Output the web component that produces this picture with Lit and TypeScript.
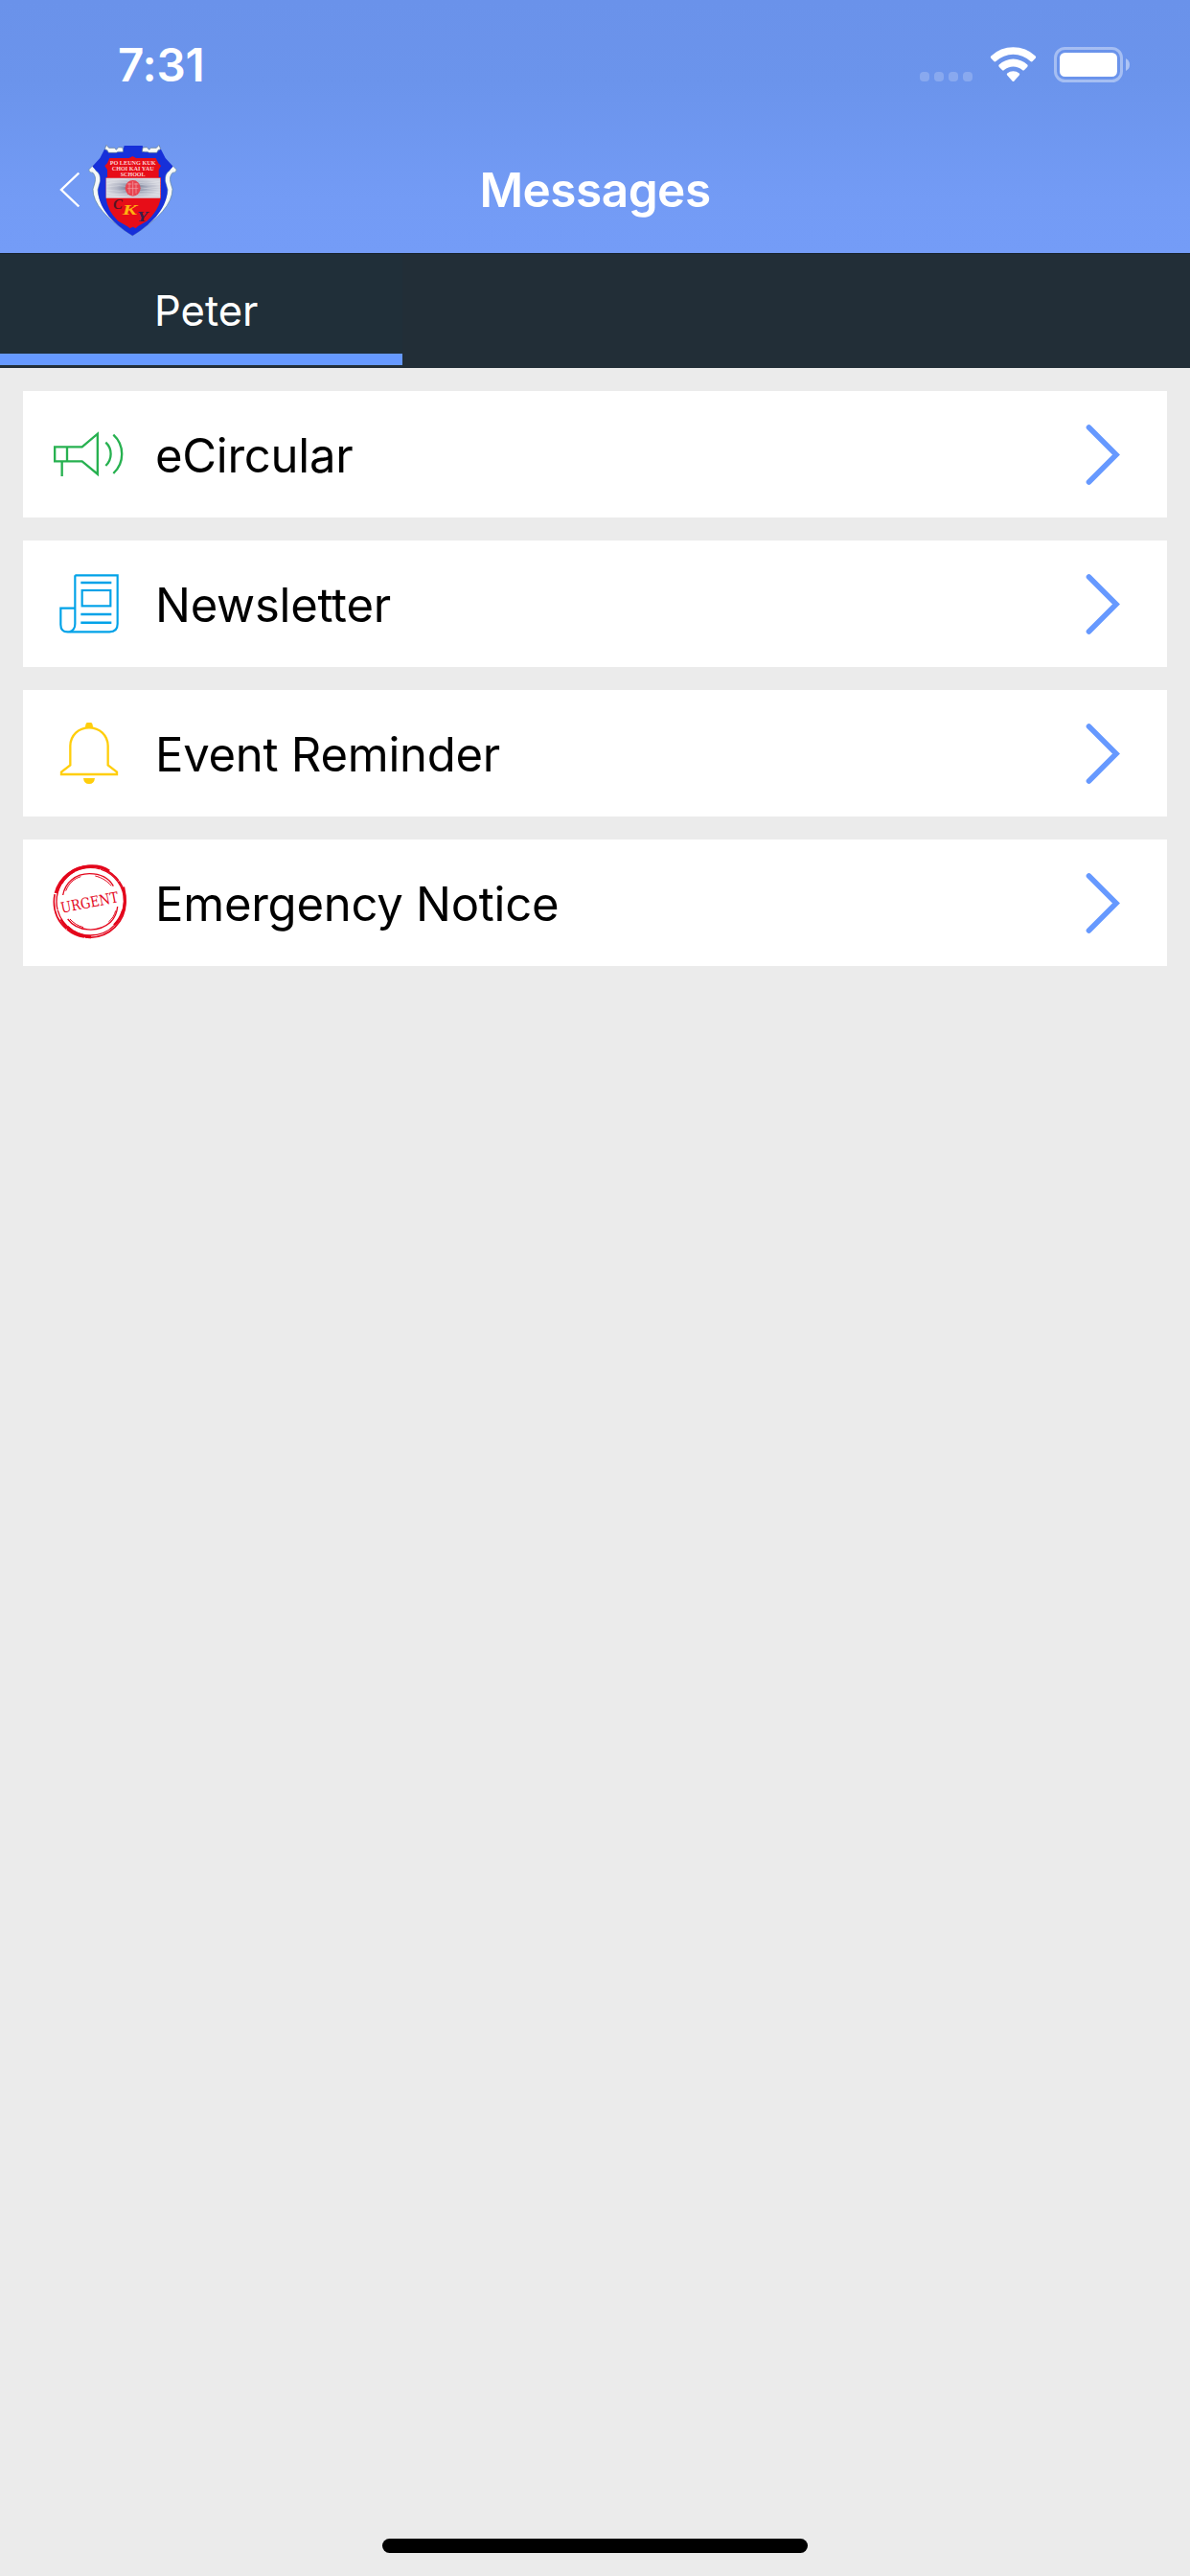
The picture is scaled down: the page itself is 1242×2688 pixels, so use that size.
import { css, html, LitElement, svg } from 'lit';
import { customElement, property } from 'lit/decorators.js';

const megaphone = svg`
    <svg width="110" height="132" viewBox="0 -66 330 396" fill="none" stroke="#27b150" stroke-width="7">
        <path d="M51.500 109H137L185.500 68V194L137 154H51.500Z" />
        <path d="M90 109V154M74 154V201" />
        <path d="M211 95A50 50 0 0 1 211 168M235 71A82 82 0 0 1 235 192" />
    </svg>
`;

const newspaper = svg`
    <svg width="110" height="132" viewBox="0 -48 330 396" fill="none" stroke="#00a2e8" stroke-width="6.500">
        <path d="M115 61H248V213Q248 238 223 238H92Q70 238 70 215V164H115" />
        <path d="M115 61V213Q115 232 98 238" />
        <path stroke-width="7.500" d="M133 84H229M133 183H229M133 209H229" />
        <rect x="137" y="108" width="89" height="49" />
    </svg>
`;

const bell = svg`
    <svg width="110" height="132" viewBox="0 -60 330 396" fill="none" stroke="#ffce0c" stroke-width="7">
        <path d="M72 204V197L100 175V115C100 83 125 58 159 58S218 83 218 115V175L246 197V204Z" />
        <path fill="#ffce0c" stroke="none" d="M147 59Q147 42 154 42H164Q171 42 171 59ZM141 216H177Q175 234 159 234T141 216Z" />
    </svg>
`;

const urgentStamp = svg`
    <svg width="110" height="132" viewBox="0 -42 330 396" fill="none" stroke="#e3051b">
        <circle cx="161" cy="153" r="112" stroke-width="5" stroke-dasharray="190 3 60 2 120 4" />
        <circle cx="163" cy="152" r="106" stroke-width="4" stroke-dasharray="80 2 140 3" />
        <path stroke-width="9" d="M72 94Q102 48 155 42Q194 38 222 57M266 107Q278 158 261 194M90 231Q121 261 165 263" />
        <path stroke-width="7" d="M57 126Q65 99 81 80M71 208Q83 233 100 242M237 226Q255 209 265 180" />
        <path stroke-width="4" d="M77 132C84 93 116 65 160 65C194 65 221 79 235 104" />
        <path stroke-width="3" d="M86 119C96 94 111 81 133 74M178 72C199 77 218 89 228 103" />
        <path stroke-width="4" d="M92 207C121 246 187 252 226 217C239 204 246 190 248 168" />
        <path stroke-width="3" d="M99 207C111 220 123 228 141 233M220 216C233 205 239 193 242 181" />
        <text
            class="stamp"
            x="160"
            y="171"
            text-anchor="middle"
            textLength="183"
            lengthAdjust="spacingAndGlyphs"
            transform="rotate(-11 160 154)"
        >URGENT</text>
    </svg>
`;

const crest = svg`
    <svg class="crest" width="93" height="97" viewBox="126 27 279 291">
        <defs>
            <radialGradient id="band">
                <stop offset="0.200" stop-color="#7c839b" />
                <stop offset="0.600" stop-color="#b3b6c5" />
                <stop offset="1" stop-color="#d5d6de" />
            </radialGradient>
        </defs>
        <path
            fill="#f5f8f7"
            stroke="#5a82a0"
            stroke-width="2"
            d="M128 108L142 94L151 112Q165 120 164 143L156 171Q159 235 265 309Q371 235 375 171L367 143Q366 120 380 112L389 94L403 108Q402 119 390 118Q379 130 384 149L390 169Q390 236 265 315Q140 236 141 169L147 149Q152 130 141 118Q129 119 128 108Z"
        />
        <path
            fill="#1630d9"
            d="M178 43L190 54H233L239 33H296L302 54H341L353 43L368 72L392 98L379 112Q365 121 367 145L374 171C374 222 337 271 265 315C193 271 157 222 157 171L164 145Q166 121 152 112L139 98L163 72Z"
        />
        <path
            fill="#f8faf8"
            stroke="#58728f"
            stroke-width="2"
            d="M178 44L183 31L191 40H209L214 46L221 38L234 39L236 52H220L214 55H190L186 47ZM353 44L348 31L340 40H322L317 46L310 38L297 39L295 52H311L317 55H341L345 47Z"
        />
        <path
            fill="#e70d18"
            d="M193 72H254L265 66L276 72H338L346 88L354 96L347 109V132H354V197Q344 239 310 269L282 285L275 292L266 287L257 292L248 285L220 269Q187 238 182 197V132H186V109L178 96L186 88Z"
        />
        <path fill="url(#band)" d="M182 134H352V197H182Z" />
        <g fill="none" stroke="#eef0f4" stroke-width="1.500" opacity="0.700">
            <path d="M183 144Q223 132 265 144T352 144M183 153Q223 142 265 151T352 153M183 162Q223 154 265 162T352 162M183 171Q223 179 265 171T352 171M183 180Q223 190 265 180T352 180M183 189Q223 198 265 188T352 189" />
        </g>
        <ellipse cx="266" cy="166" rx="24" ry="25" fill="#e84450" />
        <path fill="none" stroke="#f3a6ac" stroke-width="2" d="M249 153H262M269 153H283M255 150V182M276 150V182M249 167H283M266 145V189" />
        <g class="motto" text-anchor="middle" fill="#fbd5d5">
            <text x="266" y="92" textLength="144" lengthAdjust="spacingAndGlyphs">PO LEUNG KUK</text>
            <text x="266" y="110" textLength="132" lengthAdjust="spacingAndGlyphs">CHOI KAI YAU</text>
            <text x="266" y="128" textLength="78" lengthAdjust="spacingAndGlyphs">SCHOOL</text>
        </g>
        <g class="initials">
            <text x="204" y="230" fill="#551522">C</text>
            <text x="233" y="249" fill="#ffb310" textLength="46" lengthAdjust="spacingAndGlyphs">K</text>
            <text x="279" y="271" fill="#37204e" textLength="34" lengthAdjust="spacingAndGlyphs">Y</text>
        </g>
    </svg>
`;

@customElement('message-row')
export class MessageRow extends LitElement {
    static styles = css`
        :host {
            display: flex;
            align-items: center;
            height: 132px;
            padding: 0 48px 0 16px;
            background: #fff;
            color: #000;
        }
        svg {
            display: block;
            flex: none;
        }
        .label {
            flex: 1;
            padding: 2px 0 0 12px;
            font-size: 49px;
            letter-spacing: -0.25px;
            white-space: nowrap;
        }
        .stamp {
            font-family: 'DejaVu Serif', serif;
            font-size: 46px;
            fill: #e3051b;
            stroke: none;
        }
    `;

    @property({ type: String }) label = '';

    @property({ attribute: false }) icon: unknown = null;

    render() {
        return html`
            ${this.icon}
            <span class="label">${this.label}</span>
            <svg width="38" height="66" viewBox="0 0 38 66">
                <path d="M4.500 5L33 33.500L4.500 62" fill="none" stroke="#6699ff" stroke-width="5.600" stroke-linecap="round" />
            </svg>
        `;
    }
}

@customElement('status-bar')
export class StatusBar extends LitElement {
    static styles = css`
        :host {
            display: flex;
            justify-content: space-between;
            align-items: center;
            height: 136px;
            padding: 0 60px 0 123px;
            box-sizing: border-box;
        }
        .time {
            padding-bottom: 1px;
            font-size: 47.5px;
            font-weight: 600;
            letter-spacing: -0.2px;
        }
    `;

    render() {
        return html`
            <span class="time">7:31</span>
            <svg width="224" height="40" viewBox="956 48 224 40" fill="#fff">
                <g opacity="0.200">
                    <rect x="958" y="75" width="10" height="10" rx="4" />
                    <rect x="973" y="75" width="10" height="10" rx="4" />
                    <rect x="988" y="75" width="10" height="10" rx="4" />
                    <rect x="1003" y="75" width="10" height="10" rx="4" />
                </g>
                <path d="M1032.300 58.500A33.500 33.500 0 0 1 1078.700 58.500Q1079.600 59.700 1078.700 60.800L1075.600 64Q1074.600 64.800 1073.600 64A26.500 26.500 0 0 0 1037.400 64Q1036.400 64.800 1035.400 64L1032.300 60.800Q1031.400 59.700 1032.300 58.500Z" />
                <path d="M1040.700 67.500A21.500 21.500 0 0 1 1070.300 67.500Q1071.200 68.600 1070.300 69.700L1067.100 73Q1066 74 1065 73A14.500 14.500 0 0 0 1046 73Q1045 74 1043.900 73L1040.700 69.700Q1039.800 68.600 1040.700 67.500Z" />
                <path d="M1049.200 76.500A10 10 0 0 1 1061.800 76.500Q1062.700 77.500 1061.800 78.600L1056.500 84.400Q1055.500 85.500 1054.500 84.400L1049.200 78.600Q1048.300 77.500 1049.200 76.500Z" />
                <rect x="1099.500" y="50.500" width="69" height="34" rx="10" fill="none" stroke="#fff" stroke-width="3" opacity="0.400" />
                <rect x="1104" y="55" width="60" height="25" rx="5.500" />
                <path opacity="0.450" d="M1173 61Q1177 63 1177 67.500T1173 74Z" />
            </svg>
        `;
    }
}

@customElement('app-root')
export class AppRoot extends LitElement {
    static styles = css`
        :host {
            display: flex;
            flex-direction: column;
            height: 2688px;
            background: #ebebeb;
            color: #fff;
            font-family: Inter, 'Liberation Sans', sans-serif;
        }
        .header {
            height: 264px;
            background: linear-gradient(#6a92ea, #6b94ec 33%, #739bf5 78%, #749cf7);
        }
        .nav {
            display: grid;
            grid-template-columns: 1fr auto 1fr;
            align-items: center;
            height: 124px;
        }
        .back {
            display: flex;
            align-items: center;
            gap: 8px;
            padding-left: 62px;
        }
        .title {
            margin: 0;
            font-size: 49.5px;
            font-weight: 600;
            letter-spacing: -0.5px;
        }
        .motto {
            font-family: 'Liberation Serif', serif;
            font-size: 18px;
            font-weight: bold;
        }
        .initials {
            font-family: 'Liberation Serif', serif;
            font-size: 44px;
            font-style: italic;
            font-weight: bold;
        }
        .tabs {
            display: flex;
            height: 120px;
            background: #222e37;
            border-top: 1px solid #18232e;
            box-sizing: border-box;
        }
        .tab {
            width: 420px;
            height: 104px;
            background: #202f39;
            border-bottom: 12px solid #6699ff;
        }
        .tab span {
            display: block;
            padding: 15px 0 0 161px;
            font-size: 43.5px;
            line-height: 89px;
        }
        .list {
            display: flex;
            flex: 1;
            flex-direction: column;
            gap: 24px;
            padding: 24px;
        }
        .home {
            width: 444px;
            height: 15px;
            margin: 0 auto 24px;
            border-radius: 8px;
            background: #000;
        }
    `;

    messages = [
        { label: 'eCircular', icon: megaphone },
        { label: 'Newsletter', icon: newspaper },
        { label: 'Event Reminder', icon: bell },
        { label: 'Emergency Notice', icon: urgentStamp },
    ];

    render() {
        return html`
            <div class="header">
                <status-bar></status-bar>
                <div class="nav">
                    <div class="back">
                        <svg width="22" height="38" viewBox="0 0 22 38">
                            <path d="M20.300 1.500L2 19L20.300 36.500" fill="none" stroke="#fff" stroke-width="2.400" />
                        </svg>
                        ${crest}
                    </div>
                    <h1 class="title">Messages</h1>
                </div>
            </div>
            <div class="tabs">
                <div class="tab"><span>Peter</span></div>
            </div>
            <div class="list">
                ${this.messages.map((m) => html`<message-row .label=${m.label} .icon=${m.icon}></message-row>`)}
            </div>
            <div class="home"></div>
        `;
    }
}
